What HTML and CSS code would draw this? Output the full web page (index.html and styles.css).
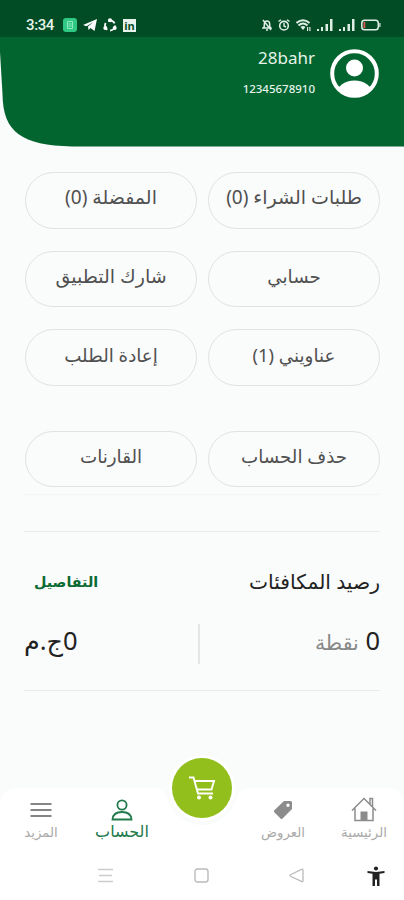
FILE: index.html
```html
<!DOCTYPE html>
<html lang="ar" dir="rtl">
<head>
	<meta charset="UTF-8">
	<meta name="viewport" content="width=device-width, initial-scale=1">
	<title>الحساب</title>
	<link rel="stylesheet" href="styles.css">
</head>

<body>

<header class="header">
	<svg class="header-bg" width="404" height="150" viewBox="0 0 404 150"><path fill="#02642f" d="M0 0H404V146.500H72C22 145 3 133 2.500 94L0 52Z"/></svg>
	<div class="status" dir="ltr">
		<div class="status-left">
			<span class="clock">3:34</span>
			<svg width="14" height="14" viewBox="0 0 14 14"><rect width="14" height="14" rx="3" fill="#2fc983"/><path d="M4.500 3.500h5v7h-5zM5.500 6h3M5.500 8h3" fill="none" stroke="#90e8c0"/></svg>
			<svg width="14" height="14" viewBox="0 0 14 14"><path fill="#fff" d="M0 7L14 1L11.500 13L7.500 10L5.500 12L5 8.500L10.500 4L3.500 8.200Z"/></svg>
			<svg width="14" height="14" viewBox="0 0 14 14"><circle cx="7" cy="7.500" r="5" fill="none" stroke="#fff" stroke-width="1.800" stroke-dasharray="7.500 3"/><circle cx="7" cy="2.300" r="2" fill="#fff"/><circle cx="2.300" cy="10" r="2" fill="#fff"/><circle cx="11.700" cy="10" r="2" fill="#fff"/></svg>
			<span class="linkedin">in</span>
		</div>
		<div class="status-right">
			<svg width="10" height="12" viewBox="0 0 10 12"><path d="M1 9H9L7.700 7.500V5Q7.500 2 5 2Q2.500 2 2.300 5V7.500ZM4 11H6M1 1L9 11" fill="none" stroke="#dfeee5" stroke-width="1.500"/></svg>
			<svg width="12" height="12" viewBox="0 0 12 12"><circle cx="6" cy="6.700" r="4.300" fill="none" stroke="#dfeee5" stroke-width="1.600"/><path d="M6 4V7L8 8M.5 2.500L3 .7M11.500 2.500L9 .7" fill="none" stroke="#dfeee5" stroke-width="1.400"/></svg>
			<svg width="15" height="12" viewBox="0 0 15 12"><path d="M.5 4Q7 -1.500 13.500 4M2.500 6.500Q7 2.500 11.500 6.500" fill="none" stroke="#dfeee5" stroke-width="2"/><path fill="#dfeee5" d="M4.500 8Q7 6 9.500 8L7 11ZM11 8h1.200v4H11zM13.300 8h1.200v4h-1.200z"/></svg>
			<svg width="16" height="12" viewBox="0 0 16 12"><path fill="#dfeee5" d="M0 10h2v2H0zM4 8h2v4H4zM8.500 5h2.500v7H8.500zM13 0h2.500v12H13z"/></svg>
			<svg width="16" height="12" viewBox="0 0 16 12"><path fill="#dfeee5" d="M0 10h2v2H0zM4 8h2v4H4zM8.500 5h2.500v7H8.500zM13 0h2.500v12H13z"/></svg>
			<svg width="20" height="12" viewBox="0 0 20 12"><rect x=".8" y="1.300" width="16.500" height="9.500" rx="2.800" fill="none" stroke="#dfeee5" stroke-width="1.500"/><path fill="#e2574c" d="M2.500 3h1.800v6H2.500z"/><path fill="#dfeee5" d="M18.300 4h1.200v4h-1.200z"/></svg>
		</div>
	</div>
	<div class="user">
		<svg width="49" height="49" viewBox="0 0 49 49">
			<clipPath id="face"><circle cx="24.500" cy="24.500" r="23"/></clipPath>
			<circle cx="24.500" cy="24.500" r="22.300" fill="none" stroke="#fff" stroke-width="4"/>
			<circle cx="24.500" cy="19" r="8.500" fill="#fff"/>
			<ellipse cx="24.500" cy="45" rx="18" ry="13.500" fill="#fff" clip-path="url(#face)"/>
		</svg>
		<div class="user-info" dir="ltr">
			<div class="name">28bahr</div>
			<div class="phone">12345678910</div>
		</div>
	</div>
</header>

<main class="content">
	<div class="grid">
		<a class="pill wide">طلبات الشراء (0)</a>
		<a class="pill wide">المفضلة (0)</a>
		<a class="pill">حسابي</a>
		<a class="pill wide">شارك التطبيق</a>
		<a class="pill">عناويني (1)</a>
		<a class="pill">إعادة الطلب</a>
	</div>
	<div class="grid extra">
		<a class="pill">حذف الحساب</a>
		<a class="pill">القارنات</a>
	</div>

	<section class="rewards">
		<div class="row">
			<h2>رصيد المكافئات</h2>
			<a class="details">التفاصيل</a>
		</div>
		<div class="row balance">
			<div class="points">0 <span>نقطة</span></div>
			<div class="money">0ج.م</div>
		</div>
	</section>
</main>

<nav class="tabs">
	<svg class="tabs-bg" width="404" height="54" viewBox="0 0 404 54"><path fill="#fff" d="M0 54V16Q2 0 18 0H152C167 0 165 8 170 17C178 31 189 37 202 37S226 31 234 17C239 8 237 0 252 0H386Q402 0 404 16V54Z"/></svg>
	<a class="tab home">
		<svg width="26" height="25" viewBox="0 0 26 25"><path d="M1 13.500L13 1.500L25 13.500M4 11.500V23.500H22V11.500M19 7V1.500H21.500V9.500" fill="none" stroke="#8c8c8c" stroke-width="1.500"/><path fill="#8c8c8c" d="M9.500 14.500h7v9h-7z"/></svg>
		<span>الرئيسية</span>
	</a>
	<a class="tab offers">
		<svg width="20" height="20" viewBox="0 0 20 20"><path fill="#8c8c8c" fill-rule="evenodd" d="M11 1H17.500Q19 1 19 2.500V9L9.500 18.500Q8.500 19.500 7.500 18.500L1.300 12.300Q.3 11.300 1.300 10.300ZM15 3.500A1.700 1.700 0 1 0 15 6.900A1.700 1.700 0 1 0 15 3.500Z"/></svg>
		<span>العروض</span>
	</a>
	<a class="cart">
		<svg width="28" height="26" viewBox="0 0 28 26"><path d="M1 2.500H5.500L10 18.500H25M6.500 6H26L23.500 14.500H9" fill="none" stroke="#fff" stroke-width="1.900"/><circle cx="11" cy="22.500" r="2" fill="#fff"/><circle cx="22.500" cy="22.500" r="2" fill="#fff"/></svg>
	</a>
	<a class="tab account">
		<svg width="22" height="22" viewBox="0 0 22 22"><circle cx="11" cy="6" r="4.600" fill="none" stroke="#237a4b" stroke-width="1.800"/><path d="M1.500 20.500Q2 13 11 13T20.500 20.500Z" fill="none" stroke="#237a4b" stroke-width="1.800"/></svg>
		<span>الحساب</span>
	</a>
	<a class="tab more">
		<svg width="22" height="16" viewBox="0 0 22 16"><path d="M.5 2H21.500M.5 8H21.500M.5 14H21.500" stroke="#858585" stroke-width="1.900"/></svg>
		<span>المزيد</span>
	</a>
</nav>

<footer class="system">
	<svg class="access" width="18" height="20" viewBox="0 0 18 20"><circle cx="9" cy="2.500" r="2.100" fill="#222"/><path fill="#222" d="M.5 5L9 6L17.500 5V7L12.500 7.800V20H10V13.500H8V20H5.500V7.800L.5 7Z"/></svg>
	<svg width="15" height="15" viewBox="0 0 15 15"><path d="M13 1.200Q14 1 14 2.200V12.800Q14 14 13 13.700L1.500 8.300Q.5 7.500 1.500 6.700Z" fill="none" stroke="#bbb" stroke-width="1.300"/></svg>
	<svg width="15" height="15" viewBox="0 0 15 15"><rect x="1" y="1" width="13" height="13" rx="2.500" fill="none" stroke="#bbb" stroke-width="1.400"/></svg>
	<svg width="15" height="15" viewBox="0 0 15 15"><path d="M0 1.500H15M1 7.500H14M0 13.500H15" stroke="#ccc" stroke-width="1.500"/></svg>
</footer>

</body>
</html>
```

FILE: styles.css
```css
* { box-sizing:border-box; }
body { margin:0; width:404px; height:900px; display:flex; flex-direction:column; overflow:hidden; background:#fafbfb; color:#505050; font-family:"Noto Sans","DejaVu Sans",sans-serif; }
svg { display:block; flex:none; }

.header { position:relative; height:150px; color:#e6f4ea; }
.header-bg { position:absolute; top:0; left:0; z-index:-1; }
.status { height:37px; padding:13px 23px 0 26px; display:flex; justify-content:space-between; background:#024c25; }
.status-left, .status-right { display:flex; align-items:center; height:24px; }
.status-left { gap:6px; }
.status-right { gap:6px; }
.clock { width:31px; font:500 15px/24px Roboto,sans-serif; letter-spacing:-.4px; }
.linkedin { width:13px; height:13px; background:#e8f2ec; color:#024c25; font:bold 11px/13px "Open Sans",sans-serif; text-align:center; }
.user { display:flex; gap:15px; padding:12px 25px 0; }
.user-info { text-align:right; }
.name { font-size:17px; line-height:18px; }
.phone { margin-top:13px; font-size:11.5px; font-weight:500; line-height:18px; }

.content { flex:1; padding:22px 24px 0; }
.grid { display:grid; grid-template-columns:172px 172px; gap:22px 11px; }
.pill { height:56.5px; padding-bottom:6px; display:flex; align-items:center; justify-content:center; border:1.5px solid #dfe3e3; border-radius:29px; font-size:18.3px; white-space:nowrap; }
.wide { font-size:19px; }
.extra { margin-top:45px; padding-bottom:7px; border-bottom:1px solid #f3f4f4; }
.rewards { height:160px; margin-top:36px; border-top:1px solid #e9ebeb; border-bottom:1px solid #e9ebeb; }
.row { display:flex; justify-content:space-between; }
.rewards h2 { margin:37px 0 0; font-size:20.3px; line-height:24px; font-weight:normal; color:#222; }
.details { margin:37px 0 0 10px; font-size:14.3px; line-height:26px; font-weight:bold; color:#0b6b33; }
.balance { height:40px; margin-top:29px; line-height:32px; font-size:25.5px; color:#222; }
.points { width:182px; border-left:2px solid #e4e5e5; }
.points span { font-size:20.5px; color:#888; }

.tabs { position:relative; height:54px; display:flex; }
.tabs-bg { position:absolute; top:0; left:0; z-index:-1; }
.tab { display:flex; flex-direction:column; align-items:center; justify-content:space-between; height:51px; color:#aaa; font-size:13.3px; line-height:14px; white-space:nowrap; }
.home { width:80px; padding-top:9px; }
.offers { width:82px; padding-top:12px; }
.account { width:80px; height:50px; padding-top:11px; color:#237a4b; font-size:16px; }
.more { width:82px; padding-top:14px; }
.cart { width:60px; height:60px; margin:-30px 10px 0; display:flex; align-items:center; justify-content:center; border-radius:50%; background:#92bf1b; box-shadow:0 0 0 3px #fff; }
.system { height:58px; display:flex; justify-content:space-between; padding:26px 19px 0 98px; background:#fff; }
.access { margin:-2px 0 0 -18px; }
```
